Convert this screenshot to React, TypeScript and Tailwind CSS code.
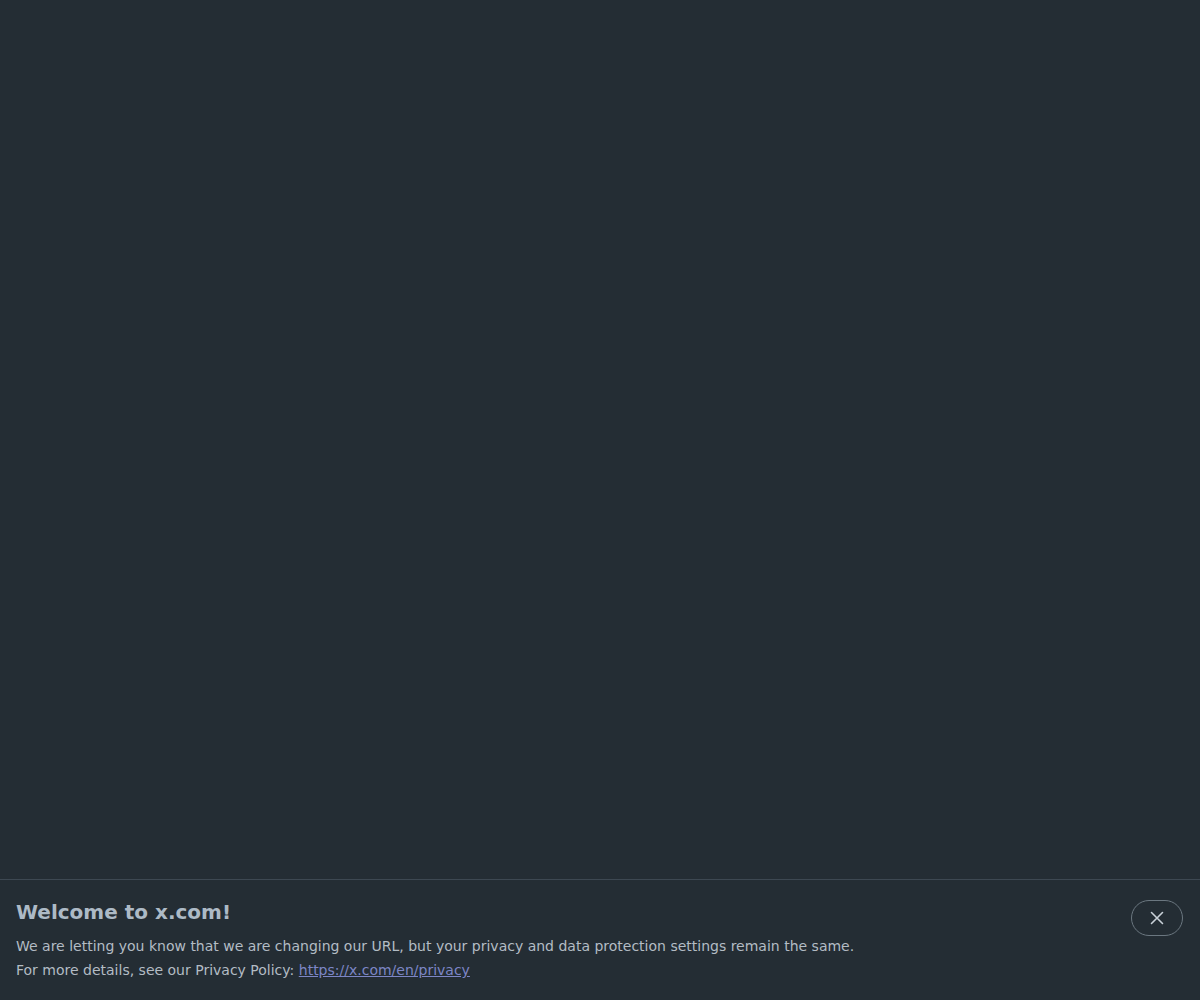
import React from "react";

export default function App() {
  return (
    <div
      className="h-[1000px] w-full bg-[#242d34] flex flex-col"
      style={{ fontFamily: '"DejaVu Sans", sans-serif' }}
    >
      <div className="flex-1" />
      <div className="border-t border-[#3d4852] h-[121px] px-4 pt-[18px] flex items-start justify-between">
        <div>
          <h1 className="text-[20px] leading-[28px] font-bold text-[#adbac6]">Welcome to x.com!</h1>
          <p className="mt-[8px] text-[14px] leading-[24px] text-[#b3bcc4]">
            We are letting you know that we are changing our URL, but your privacy and data protection settings remain the same.
            <br />
            For more details, see our Privacy Policy:{" "}
            <a href="#" className="text-[#7d86c6] underline">https://x.com/en/privacy</a>
          </p>
        </div>
        <button className="mt-[2px] mr-[1px] w-[52px] h-[36px] rounded-full border border-[#6b7780] flex items-center justify-center text-[#c9d1d8]">
          <svg width="14" height="14" viewBox="0 0 14 14" fill="none" stroke="currentColor" strokeWidth="1.6" strokeLinecap="round">
            <path d="M1.5 1.5 L12.5 12.5 M12.5 1.5 L1.5 12.5" />
          </svg>
        </button>
      </div>
    </div>
  );
}
